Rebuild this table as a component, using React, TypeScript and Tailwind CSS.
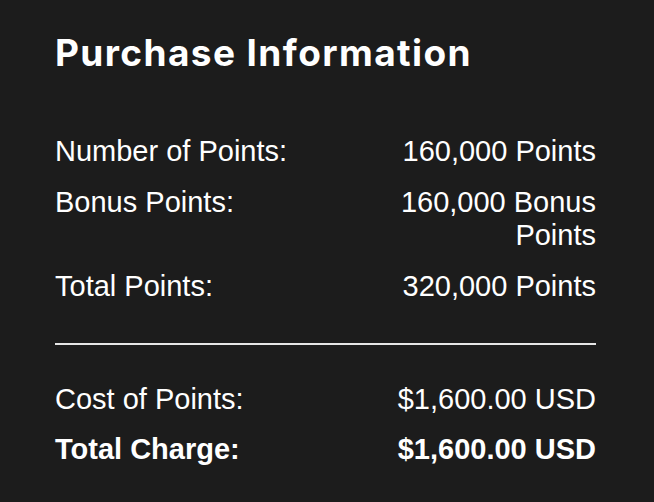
import React from 'react';

const rows = [
  { label: 'Number of Points:', value: '160,000 Points' },
  { label: 'Bonus Points:', value: '160,000 Bonus Points' },
  { label: 'Total Points:', value: '320,000 Points' },
];

const charges = [
  { label: 'Cost of Points:', value: '$1,600.00 USD', bold: false },
  { label: 'Total Charge:', value: '$1,600.00 USD', bold: true },
];

const App = () => {
  return (
    <div className="w-[654px] h-[502px] bg-[#1c1c1c] text-white pl-[55px] pr-[58px] pt-[31px] overflow-hidden">
      {/* Title */}
      <h1 className="font-['Inter',sans-serif] font-bold text-[37px] leading-[44px] tracking-[1.4px]">
        Purchase Information
      </h1>

      {/* Points breakdown */}
      <div className="mt-[60px] flex flex-col gap-[18px] font-['Liberation_Sans',Arial,sans-serif] text-[29px] leading-[33px]">
        {rows.map((row) => (
          <div key={row.label} className="grid grid-cols-2">
            <div>{row.label}</div>
            <div className="text-right">{row.value}</div>
          </div>
        ))}
      </div>

      <hr className="mt-[40px] border-0 h-[2px] bg-[#e6e6e6]" />

      {/* Charges */}
      <div className="mt-[38px] flex flex-col gap-[17px] font-['Liberation_Sans',Arial,sans-serif] text-[29px] leading-[33px]">
        {charges.map((row) => (
          <div key={row.label} className={`grid grid-cols-2 ${row.bold ? 'font-bold' : ''}`}>
            <div>{row.label}</div>
            <div className="text-right">{row.value}</div>
          </div>
        ))}
      </div>
    </div>
  );
};

export default App;
